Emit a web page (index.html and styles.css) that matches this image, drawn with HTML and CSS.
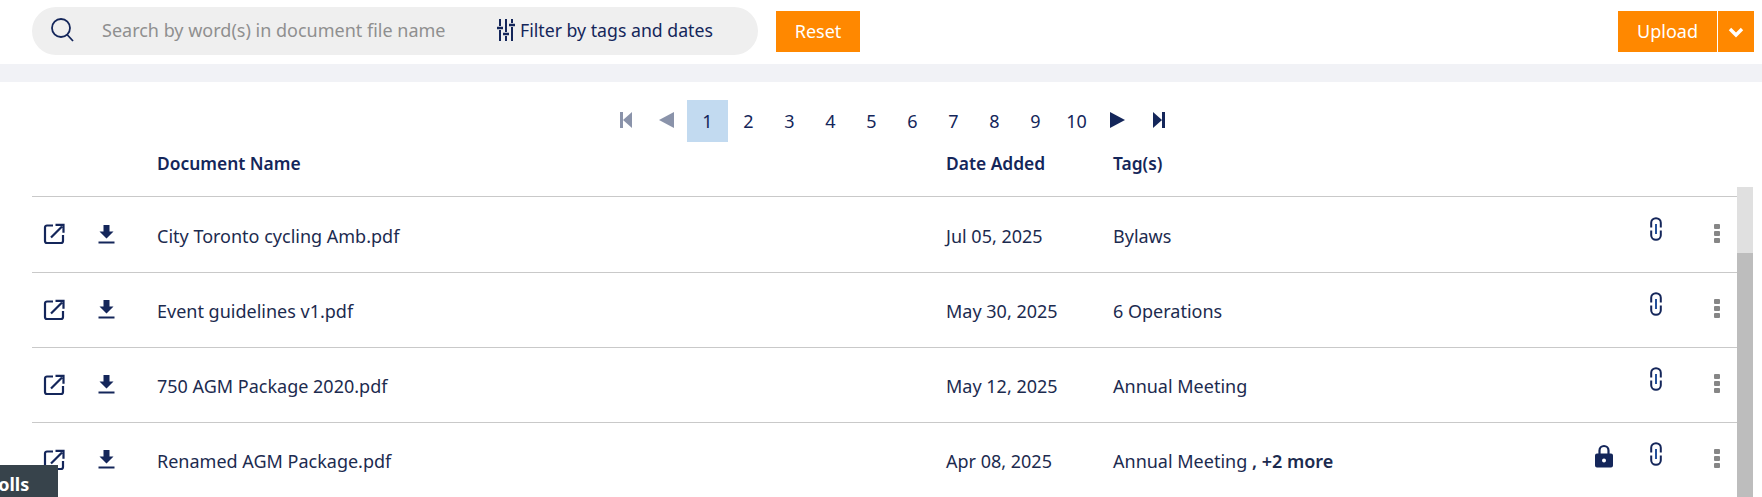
FILE: index.html
```html
<!DOCTYPE html>
<html lang="en">
<head>
    <meta charset="UTF-8">
    <meta name="viewport" content="width=device-width, initial-scale=1.0">
    <title>Documents</title>
    <link rel="stylesheet" href="styles.css">
</head>
<body>
    <svg class="sprites" width="0" height="0">
        <symbol id="i-open" viewBox="0 0 22 22">
            <path d="M10 2.500H4a2 2 0 0 0-2 2v13.500a2 2 0 0 0 2 2h14a2 2 0 0 0 2-2v-6" fill="none" stroke="currentColor" stroke-width="2.200"/>
            <path d="M8 14.500 19 3.500M12.500 1.800h8v8" fill="none" stroke="currentColor" stroke-width="2.200"/>
        </symbol>
        <symbol id="i-download" viewBox="0 0 16 20">
            <path d="M5 1h6v6.500h4L8 14.500 1 7.500h4zM0 17.500h16v2H0z" fill="currentColor"/>
        </symbol>
        <symbol id="i-link" viewBox="0 0 12 24">
            <path d="M1.200 10.500V5.800a4.800 4.600 0 0 1 9.600 0v4.700M1.200 13.500v4.700a4.800 4.600 0 0 0 9.600 0v-4.700" fill="none" stroke="currentColor" stroke-width="2"/>
            <path d="M6 7v10" fill="none" stroke="#24509a" stroke-width="2"/>
        </symbol>
        <symbol id="i-lock" viewBox="0 0 18 24">
            <path d="M4.500 10V6.500a4.500 4.500 0 0 1 9 0V10" fill="none" stroke="currentColor" stroke-width="2.200"/>
            <path fill-rule="evenodd" d="M2 9.500h14a2 2 0 0 1 2 2v10a2 2 0 0 1-2 2H2a2 2 0 0 1-2-2v-10a2 2 0 0 1 2-2zM9 14.500a2 2 0 1 0 0 4 2 2 0 0 0 0-4z" fill="currentColor"/>
        </symbol>
    </svg>

    <header class="toolbar">
        <div class="search-pill">
            <svg class="search-icon" viewBox="0 0 24 26" width="24" height="26">
                <circle cx="11" cy="11" r="9" fill="none" stroke="currentColor" stroke-width="1.800"/>
                <path d="M17 17.500 23 24" fill="none" stroke="currentColor" stroke-width="1.800"/>
            </svg>
            <span class="search-text">Search by word(s) in document file name</span>
            <button class="filter-btn">
                <svg viewBox="0 0 18 22" width="18" height="22">
                    <path d="M3 0v7M3 11v11M9 0v13M9 17v5M15 0v4M15 8v14" stroke="currentColor" stroke-width="2" fill="none"/>
                    <path d="M0 9h6M6 15h6M12 6h6" stroke="currentColor" stroke-width="2.400" fill="none"/>
                </svg>
                Filter by tags and dates
            </button>
        </div>
        <button class="btn-orange reset-btn">Reset</button>
        <div class="upload-group">
            <button class="btn-orange upload-btn">Upload</button>
            <button class="btn-orange caret-btn">
                <svg viewBox="0 0 16 11" width="16" height="11">
                    <path d="M2 2l6 6 6-6" fill="none" stroke="currentColor" stroke-width="3.400"/>
                </svg>
            </button>
        </div>
    </header>
    <div class="band"></div>

    <main class="content">
        <nav class="pager">
            <a class="pager-arrow muted">
                <svg viewBox="0 0 12 16" width="12" height="16"><path d="M0 0h3v16H0zM12 0v16L3 8z" fill="currentColor"/></svg>
            </a>
            <a class="pager-arrow muted">
                <svg viewBox="0 0 15 16" width="15" height="16"><path d="M15 0v16L0 8z" fill="currentColor"/></svg>
            </a>
            <a class="page active">1</a>
            <a class="page">2</a>
            <a class="page">3</a>
            <a class="page">4</a>
            <a class="page">5</a>
            <a class="page">6</a>
            <a class="page">7</a>
            <a class="page">8</a>
            <a class="page">9</a>
            <a class="page">10</a>
            <a class="pager-arrow">
                <svg viewBox="0 0 15 16" width="15" height="16"><path d="M0 0v16l15-8z" fill="currentColor"/></svg>
            </a>
            <a class="pager-arrow">
                <svg viewBox="0 0 12 16" width="12" height="16"><path d="M0 0v16l9-8zM9 0h3v16H9z" fill="currentColor"/></svg>
            </a>
        </nav>

        <div class="row head">
            <span></span><span></span>
            <span>Document Name</span>
            <span>Date Added</span>
            <span>Tag(s)</span>
        </div>

        <div class="row">
            <svg class="ic-open"><use href="#i-open"/></svg>
            <svg class="ic-down"><use href="#i-download"/></svg>
            <span>City Toronto cycling Amb.pdf</span>
            <span>Jul 05, 2025</span>
            <span>Bylaws</span>
            <span></span>
            <svg class="ic-link"><use href="#i-link"/></svg>
            <span class="dots"><i></i><i></i><i></i></span>
        </div>
        <div class="row">
            <svg class="ic-open"><use href="#i-open"/></svg>
            <svg class="ic-down"><use href="#i-download"/></svg>
            <span>Event guidelines v1.pdf</span>
            <span>May 30, 2025</span>
            <span>6 Operations</span>
            <span></span>
            <svg class="ic-link"><use href="#i-link"/></svg>
            <span class="dots"><i></i><i></i><i></i></span>
        </div>
        <div class="row">
            <svg class="ic-open"><use href="#i-open"/></svg>
            <svg class="ic-down"><use href="#i-download"/></svg>
            <span>750 AGM Package 2020.pdf</span>
            <span>May 12, 2025</span>
            <span>Annual Meeting</span>
            <span></span>
            <svg class="ic-link"><use href="#i-link"/></svg>
            <span class="dots"><i></i><i></i><i></i></span>
        </div>
        <div class="row">
            <svg class="ic-open"><use href="#i-open"/></svg>
            <svg class="ic-down"><use href="#i-download"/></svg>
            <span>Renamed AGM Package.pdf</span>
            <span>Apr 08, 2025</span>
            <span>Annual Meeting <b>, +2 more</b></span>
            <svg class="ic-lock"><use href="#i-lock"/></svg>
            <svg class="ic-link"><use href="#i-link"/></svg>
            <span class="dots"><i></i><i></i><i></i></span>
        </div>

        <div class="scrollbar"><div class="thumb"></div></div>
    </main>

    <div class="polls-tab"><span>Polls</span></div>
</body>
</html>
```

FILE: styles.css
```css
html, body {
    height: 100%;
}
body {
    font-family: "Noto Sans", Arial, sans-serif;
    font-size: 18px;
    color: #1c2b4f;
    background-color: #fff;
    margin: 0;
    padding: 0;
    overflow: hidden;
    position: relative;
}
button {
    font-family: inherit;
    border: none;
    cursor: pointer;
}
.sprites {
    position: absolute;
}
.toolbar {
    display: flex;
    align-items: center;
    height: 64px;
    padding: 0 8px 2px 32px;
    box-sizing: border-box;
}
.search-pill {
    display: flex;
    align-items: center;
    width: 726px;
    height: 48px;
    padding-left: 18px;
    box-sizing: border-box;
    background-color: #efefef;
    border-radius: 24px;
}
.search-icon {
    color: #14265a;
    margin-top: -2px;
}
.search-text {
    color: #8f8f8f;
    margin: -2px 0 0 28px;
    width: 395px;
}
.filter-btn {
    display: flex;
    align-items: center;
    gap: 5px;
    padding: 0;
    background: none;
    font-size: 17.700px;
    color: #14265a;
    margin: -2px 0 0 0;
}
.btn-orange {
    background-color: #ff8800;
    color: #fff;
    font-size: 18px;
    height: 41px;
}
.reset-btn {
    width: 84px;
    margin-left: 18px;
}
.upload-group {
    display: flex;
    gap: 1px;
    margin-left: auto;
}
.upload-btn {
    width: 99px;
}
.caret-btn {
    width: 36px;
    padding: 0;
}
.band {
    height: 18px;
    background-color: #f1f2f6;
}
.content {
    position: relative;
    padding: 18px 25px 0 32px;
}
.pager {
    display: flex;
    justify-content: center;
    height: 42px;
    padding-left: 15px;
}
.pager a {
    display: flex;
    align-items: center;
    justify-content: center;
    width: 41px;
    color: #14265a;
}
.pager .muted {
    color: #8a93aa;
}
.pager .pager-arrow svg {
    margin-top: -3px;
}
.pager .active {
    background-color: #c2daf0;
}
.row {
    display: grid;
    grid-template-columns: 66px 59px 789px 167px 1fr 40px 64px 49px;
    align-items: center;
    height: 75px;
    box-sizing: border-box;
    padding-top: 2px;
    border-top: 1px solid #c9c9c9;
}
.row.head {
    height: 55px;
    padding: 0 0 12px 0;
    border-top: none;
    border-bottom: 1px solid #c9c9c9;
    font-size: 17.400px;
    font-weight: 600;
    color: #14265a;
}
.head + .row {
    border-top: none;
}
.row b {
    font-weight: 600;
}
.ic-open {
    width: 22px;
    height: 22px;
    margin: -3px 0 0 11px;
    color: #14265a;
}
.ic-down {
    width: 17px;
    height: 20px;
    color: #14265a;
    margin-top: -4px;
}
.ic-link {
    width: 14px;
    height: 24px;
    color: #14265a;
    margin-top: -14px;
    justify-self: center;
}
.ic-lock {
    width: 18px;
    height: 24px;
    color: #14265a;
    margin-top: -11px;
    justify-self: center;
}
.dots {
    display: flex;
    flex-direction: column;
    gap: 2px;
    margin: 0 0 5px 26px;
}
.dots i {
    width: 6px;
    height: 5px;
    background-color: #868686;
    border-radius: 1px;
}
.scrollbar {
    position: absolute;
    top: 105px;
    right: 9px;
    width: 16px;
    height: 400px;
    background-color: #e0e0e0;
}
.thumb {
    margin-top: 66px;
    height: 334px;
    background-color: #bdbdbd;
}
.polls-tab {
    position: absolute;
    left: 0;
    bottom: 0;
    width: 58px;
    height: 32px;
    background-color: #37434b;
    color: #fff;
    font-weight: 700;
    font-size: 18px;
    line-height: 38px;
    overflow: hidden;
}
.polls-tab span {
    display: block;
    margin-left: -13px;
}
```
